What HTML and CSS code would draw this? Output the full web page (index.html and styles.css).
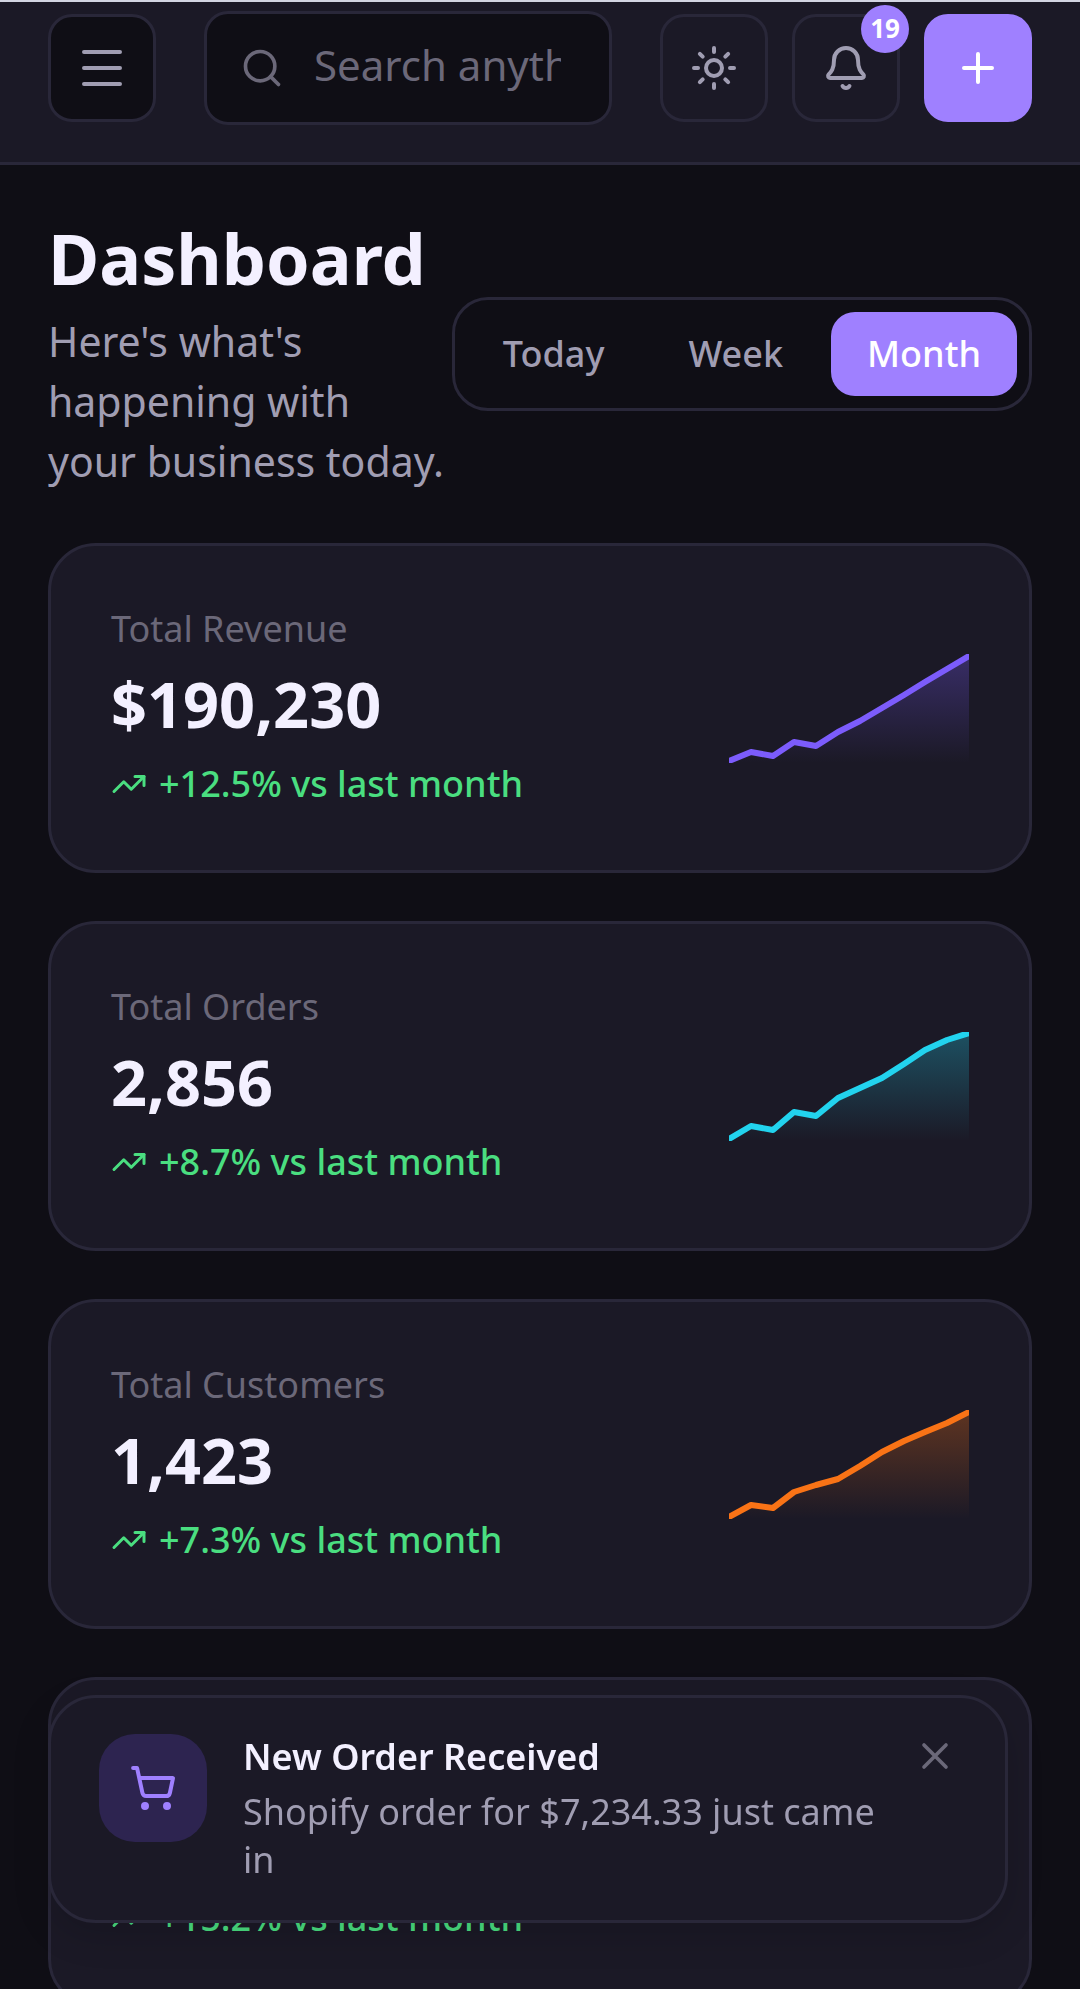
FILE: index.html
```html
<!DOCTYPE html>
<html lang="en">
<head>
  <meta charset="UTF-8" />
  <meta name="viewport" content="width=device-width, initial-scale=1" />
  <title>Dashboard</title>
  <link rel="stylesheet" href="styles.css">
</head>
<body>
  <header class="topbar">
    <button class="icon-btn menu-btn" aria-label="Open menu">
      <svg class="icon" viewBox="0 0 24 24"><path d="M3 4h18M3 12h18M3 20h18"/></svg>
    </button>
    <label class="search">
      <svg class="icon icon-md" viewBox="0 0 24 24"><circle cx="11" cy="11" r="8"/><path d="m21 21-4.3-4.3"/></svg>
      <input type="text" placeholder="Search anything..." aria-label="Search" />
    </label>
    <div class="topbar-actions">
      <button class="icon-btn" aria-label="Toggle theme">
        <svg class="icon" viewBox="0 0 24 24"><circle cx="12" cy="12" r="4"/><path d="M12 2v2M12 20v2M4.93 4.93l1.41 1.41M17.66 17.66l1.41 1.41M2 12h2M20 12h2M6.34 17.66l-1.41 1.41M19.07 4.93l-1.41 1.41"/></svg>
      </button>
      <button class="icon-btn" aria-label="Notifications">
        <svg class="icon" viewBox="0 0 24 24"><path d="M10.27 21a2 2 0 0 0 3.46 0"/><path d="M3.26 15.33A1 1 0 0 0 4 17h16a1 1 0 0 0 .74-1.67C19.41 13.96 18 12.5 18 8A6 6 0 0 0 6 8c0 4.5-1.41 5.96-2.74 7.33"/></svg>
        <span class="badge">19</span>
      </button>
      <button class="icon-btn primary" aria-label="Add new">
        <svg class="icon" viewBox="0 0 24 24"><path d="M5 12h14M12 5v14"/></svg>
      </button>
    </div>
  </header>

  <main class="content">
    <div class="page-header">
      <div class="page-title">
        <h1>Dashboard</h1>
        <p>Here's what's happening with your&nbsp;business&nbsp;today.</p>
      </div>
      <div class="period">
        <button class="period-btn">Today</button>
        <button class="period-btn">Week</button>
        <button class="period-btn active">Month</button>
      </div>
    </div>

    <div class="stats">
      <div class="stat-card">
        <div class="stat-info">
          <div class="stat-label">Total Revenue</div>
          <div class="stat-value">$190,230</div>
          <div class="stat-trend">
            <svg class="icon icon-sm" viewBox="0 0 24 24"><path d="M22 7l-8.5 8.5-5-5L2 17"/><path d="M16 7h6v6"/></svg>
            <span>+12.5% vs last month</span>
          </div>
        </div>
        <svg class="sparkline revenue" viewBox="0 0 240 109">
          <defs>
            <linearGradient id="revenueFill" x1="0" y1="0" x2="0" y2="1">
              <stop offset="0" stop-color="#7c5cfc" stop-opacity="0.3"/>
              <stop offset="1" stop-color="#7c5cfc" stop-opacity="0"/>
            </linearGradient>
          </defs>
          <path class="area" fill="url(#revenueFill)" d="M0 107L22 98L44 102L65 88L87 92L109 78L131 67L153 54L175 41L196 28L218 15L240 2V109H0Z"/>
          <path class="line" d="M0 107L22 98L44 102L65 88L87 92L109 78L131 67L153 54L175 41L196 28L218 15L240 2"/>
        </svg>
      </div>

      <div class="stat-card">
        <div class="stat-info">
          <div class="stat-label">Total Orders</div>
          <div class="stat-value">2,856</div>
          <div class="stat-trend">
            <svg class="icon icon-sm" viewBox="0 0 24 24"><path d="M22 7l-8.5 8.5-5-5L2 17"/><path d="M16 7h6v6"/></svg>
            <span>+8.7% vs last month</span>
          </div>
        </div>
        <svg class="sparkline orders" viewBox="0 0 240 109">
          <defs>
            <linearGradient id="ordersFill" x1="0" y1="0" x2="0" y2="1">
              <stop offset="0" stop-color="#22d3ee" stop-opacity="0.3"/>
              <stop offset="1" stop-color="#22d3ee" stop-opacity="0"/>
            </linearGradient>
          </defs>
          <path class="area" fill="url(#ordersFill)" d="M0 107L22 94L44 98L65 80L87 84L109 66L131 56L153 46L175 32L196 18L218 8L240 1V109H0Z"/>
          <path class="line" d="M0 107L22 94L44 98L65 80L87 84L109 66L131 56L153 46L175 32L196 18L218 8L240 1"/>
        </svg>
      </div>

      <div class="stat-card">
        <div class="stat-info">
          <div class="stat-label">Total Customers</div>
          <div class="stat-value">1,423</div>
          <div class="stat-trend">
            <svg class="icon icon-sm" viewBox="0 0 24 24"><path d="M22 7l-8.5 8.5-5-5L2 17"/><path d="M16 7h6v6"/></svg>
            <span>+7.3% vs last month</span>
          </div>
        </div>
        <svg class="sparkline customers" viewBox="0 0 240 109">
          <defs>
            <linearGradient id="customersFill" x1="0" y1="0" x2="0" y2="1">
              <stop offset="0" stop-color="#f97316" stop-opacity="0.3"/>
              <stop offset="1" stop-color="#f97316" stop-opacity="0"/>
            </linearGradient>
          </defs>
          <path class="area" fill="url(#customersFill)" d="M0 107L22 95L44 98L65 82L87 75L109 69L131 56L153 42L175 31L196 22L218 13L240 2V109H0Z"/>
          <path class="line" d="M0 107L22 95L44 98L65 82L87 75L109 69L131 56L153 42L175 31L196 22L218 13L240 2"/>
        </svg>
      </div>

      <div class="stat-card">
        <div class="stat-info">
          <div class="stat-label">Total Profit</div>
          <div class="stat-value">$48,560</div>
          <div class="stat-trend">
            <svg class="icon icon-sm" viewBox="0 0 24 24"><path d="M22 7l-8.5 8.5-5-5L2 17"/><path d="M16 7h6v6"/></svg>
            <span>+15.2% vs last month</span>
          </div>
        </div>
      </div>
    </div>
  </main>

  <div class="toast" id="toast" role="status">
    <div class="toast-icon">
      <svg class="icon" viewBox="0 0 24 24"><circle cx="8" cy="21" r="1"/><circle cx="19" cy="21" r="1"/><path d="M2.05 2.05h2l2.66 12.42a2 2 0 0 0 2 1.58h9.78a2 2 0 0 0 1.95-1.57L22 7.05H5.12"/></svg>
    </div>
    <div class="toast-body">
      <div class="toast-title">New Order Received</div>
      <div class="toast-text">Shopify order for $7,234.33 just came in</div>
    </div>
    <button class="toast-close" id="toastClose" aria-label="Close">
      <svg class="icon icon-md" viewBox="0 0 24 24"><path d="M18 6 6 18M6 6l12 12"/></svg>
    </button>
  </div>

  <script>
    document.querySelectorAll('.period-btn').forEach(btn => {
      btn.addEventListener('click', () => {
        document.querySelectorAll('.period-btn').forEach(b => b.classList.remove('active'));
        btn.classList.add('active');
      });
    });

    document.getElementById('toastClose').addEventListener('click', () => {
      document.getElementById('toast').remove();
    });
  </script>
</body>
</html>
```
FILE: styles.css
```css
:root {
  --bg: #0f0e15;
  --surface: #1b1926;
  --border: #292739;
  --text: #f3f0ff;
  --text-muted: #a09db2;
  --text-dim: #6b6879;
  --accent: #9f80ff;
  --success: #4ade80;
}

* {
  margin: 0;
  padding: 0;
  box-sizing: border-box;
}

body {
  font-family: "Noto Sans", "Open Sans", sans-serif;
  font-size: 36px;
  background-color: var(--bg);
  color: var(--text);
  height: 100vh;
  overflow: hidden;
}

button,
input {
  font: inherit;
  color: inherit;
  background: none;
  border: none;
  outline: none;
}

button {
  cursor: pointer;
}

.icon {
  display: block;
  flex-shrink: 0;
  width: 48px;
  height: 48px;
  fill: none;
  stroke: currentColor;
  stroke-width: 2;
  stroke-linecap: round;
  stroke-linejoin: round;
}

.icon-md {
  width: 44px;
  height: 44px;
}

.icon-sm {
  width: 36px;
  height: 36px;
}

/* Top bar */
.topbar {
  display: flex;
  align-items: center;
  gap: 48px;
  padding: 9px 48px 37px;
  background-color: var(--surface);
  border-top: 2px solid #d3d5e2;
  border-bottom: 3px solid var(--border);
}

.topbar-actions {
  display: flex;
  gap: 24px;
}

.icon-btn {
  position: relative;
  display: flex;
  align-items: center;
  justify-content: center;
  flex-shrink: 0;
  width: 108px;
  height: 108px;
  border: 3px solid var(--border);
  border-radius: 24px;
  color: var(--text-muted);
}

.menu-btn {
  background-color: var(--bg);
}

.icon-btn.primary {
  background-color: var(--accent);
  border-color: var(--accent);
  color: #fff;
}

.badge {
  position: absolute;
  top: -12px;
  right: -12px;
  width: 48px;
  height: 48px;
  border-radius: 50%;
  background-color: var(--accent);
  color: #fff;
  font-size: 26px;
  font-weight: 700;
  line-height: 46px;
  text-align: center;
}

.search {
  display: flex;
  align-items: center;
  gap: 30px;
  flex: 1;
  min-width: 0;
  height: 114px;
  padding: 0 48px 0 33px;
  background-color: var(--bg);
  border: 3px solid var(--border);
  border-radius: 24px;
  color: var(--text-dim);
}

.search input {
  flex: 1;
  min-width: 0;
  height: 100%;
  padding-bottom: 8px;
  font-size: 42px;
  color: var(--text);
}

.search input::placeholder {
  color: var(--text-dim);
  opacity: 1;
}

/* Page header */
.content {
  padding: 48px;
}

.page-header {
  display: flex;
  align-items: center;
  justify-content: space-between;
  margin-bottom: 48px;
}

.page-title {
  flex: 1;
  padding-bottom: 4px;
}

.page-title h1 {
  margin-bottom: 8px;
  font-size: 70px;
  font-weight: 700;
  line-height: 90px;
}

.page-title p {
  font-size: 41px;
  line-height: 60px;
  color: var(--text-muted);
}

.period {
  display: flex;
  gap: 12px;
  flex-shrink: 0;
  padding: 12px;
  border: 3px solid var(--border);
  border-radius: 36px;
}

.period-btn {
  padding: 0 36px;
  border-radius: 24px;
  font-weight: 500;
  line-height: 84px;
  color: var(--text-muted);
}

.period-btn.active {
  background-color: var(--accent);
  color: #fff;
}

/* Stat cards */
.stats {
  display: flex;
  flex-direction: column;
  gap: 48px;
}

.stat-card {
  display: flex;
  align-items: center;
  justify-content: space-between;
  padding: 60px;
  background-color: var(--surface);
  border: 3px solid var(--border);
  border-radius: 48px;
}

.stat-label {
  margin-bottom: 12px;
  line-height: 46px;
  color: var(--text-dim);
}

.stat-value {
  margin-bottom: 14px;
  font-size: 63px;
  font-weight: 700;
  line-height: 80px;
}

.stat-trend {
  display: flex;
  align-items: center;
  gap: 12px;
  font-weight: 500;
  line-height: 52px;
  color: var(--success);
}

.sparkline {
  flex-shrink: 0;
  width: 240px;
  height: 109px;
}

.sparkline .line {
  fill: none;
  stroke: currentColor;
  stroke-width: 6;
  stroke-linecap: round;
  stroke-linejoin: round;
}

.revenue {
  color: #7c5cfc;
}

.orders {
  color: #22d3ee;
}

.customers {
  color: #f97316;
}

/* Toast */
.toast {
  position: fixed;
  left: 48px;
  right: 72px;
  bottom: 66px;
  display: flex;
  align-items: flex-start;
  gap: 36px;
  padding: 36px 48px;
  background-color: var(--surface);
  border: 3px solid var(--border);
  border-radius: 48px;
  box-shadow: 0 12px 36px rgba(0, 0, 0, 0.15);
}

.toast-icon {
  display: flex;
  align-items: center;
  justify-content: center;
  flex-shrink: 0;
  width: 108px;
  height: 108px;
  border-radius: 36px;
  background-color: #2d2450;
  color: var(--accent);
}

.toast-body {
  flex: 1;
}

.toast-title {
  margin-bottom: 8px;
  font-weight: 600;
  line-height: 46px;
}

.toast-text {
  line-height: 48px;
  color: var(--text-muted);
}

.toast-close {
  color: var(--text-dim);
}
```
